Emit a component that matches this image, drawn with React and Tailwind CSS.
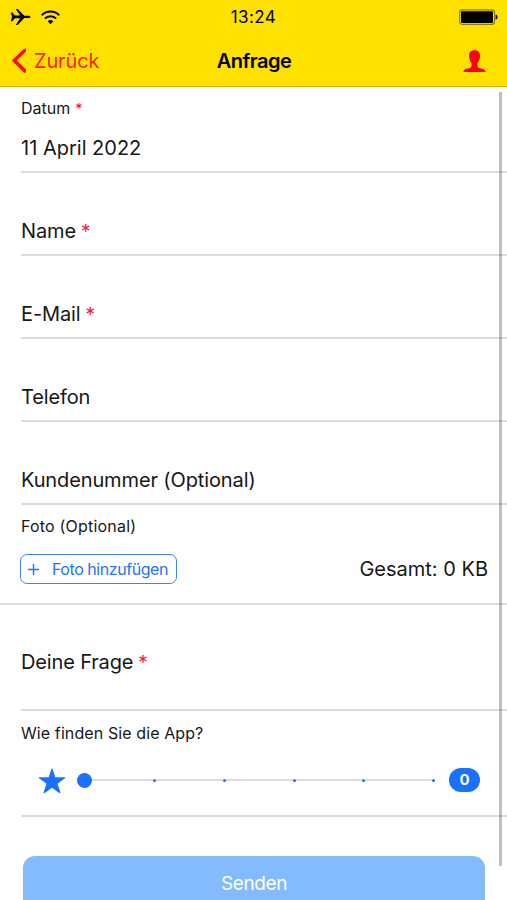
import { useState } from 'react';

const divider = 'ml-[21px] border-b-2 border-[#dcdcdc]';

function Required({ small }) {
  return (
    <span
      className={
        small
          ? 'ml-[5px] text-[14px] leading-none font-medium text-[#fb1436]'
          : 'ml-[5px] text-[19px] leading-none text-[#fb1436]'
      }
    >
      *
    </span>
  );
}

function StatusBar() {
  return (
    <div className="flex h-[34px] items-center justify-between pl-[10px] pr-[9px]">
      <div className="flex w-[60px] items-center gap-[10px]">
        <svg width="21" height="18" viewBox="0 0 21 18">
          <path
            d="M1 4.500h1.500l2.400 3 5.300.1L5.800.9h1.900l6.600 6.900h4.100c1.300 0 2 .5 2 1.100s-.7 1.100-2 1.100h-4.100L7.700 16.900H5.800l4.400-6.700-5.300.1-2.400 3H1l.9-4.400z"
            fill="#000"
          />
        </svg>
        <svg width="19" height="15" viewBox="0 0 19 15" fill="none" stroke="#000" strokeWidth="2">
          <path d="M.8 5.200a12.300 12.300 0 0 1 17.400 0M3.900 8.500a7.900 7.900 0 0 1 11.200 0" />
          <path d="M9.500 14.200 6.700 11.300a4 4 0 0 1 5.600 0z" fill="#000" stroke="none" />
        </svg>
      </div>
      <span className="-ml-px pt-[2px] text-[17px] tracking-[0.4px]">13:24</span>
      <div className="flex w-[60px] justify-end">
        <svg width="39" height="16" viewBox="0 0 39 16">
          <rect x=".7" y=".9" width="34.800" height="14.400" rx="2.500" fill="none" stroke="#8d7c00" strokeWidth="1.200" />
          <rect x="2" y="2.300" width="32" height="11.700" rx="1" fill="#000" />
          <path d="M36.600 5.400c1.400.3 1.900 1.300 1.900 2.700s-.5 2.400-1.900 2.700z" fill="#000" />
        </svg>
      </div>
    </div>
  );
}

function NavBar() {
  return (
    <div className="flex h-[53px] items-center justify-between pl-[11px] pr-[21px] pt-px text-[20px]">
      <button className="flex w-[100px] items-center gap-[8px] text-[#ff1a00]">
        <svg
          width="15"
          height="26"
          viewBox="0 0 15 26"
          fill="none"
          stroke="#ff0a0a"
          strokeWidth="3.400"
          strokeLinecap="round"
        >
          <path d="M14 2.200 3.200 12.500 14 23" />
        </svg>
        <span className="tracking-[-0.15px]">Zurück</span>
      </button>
      <h1 className="ml-[11px] font-semibold tracking-[-0.5px]">Anfrage</h1>
      <div className="flex w-[100px] justify-end">
        <svg width="23" height="23" viewBox="0 0 23 23">
          <path
            d="M11.500.2c3.500 0 5.500 2 5.500 5.500 0 3.200-1.100 5.700-2.500 7.300v2.900c0 1.500 1.600 2.200 3.700 2.600 2.500.5 4.200 1.200 4.400 3.500H.4c.2-2.300 1.900-3 4.400-3.500 2.100-.4 3.700-1.100 3.700-2.600V13C7.100 11.400 6 8.900 6 5.700 6 2.200 8 .2 11.500.2z"
            fill="#ff0010"
          />
        </svg>
      </div>
    </div>
  );
}

function Field({ label, required }) {
  return (
    <div className={`flex h-[83px] items-end pb-[8px] ${divider}`}>
      <label className="text-[20px] leading-[30px] tracking-[-0.12px]">
        {label}
        {required && <Required />}
      </label>
    </div>
  );
}

function RatingSlider({ value }) {
  return (
    <div className="mt-[22px] flex items-center pl-[17px]">
      <svg className="mt-[2px]" width="28" height="26" viewBox="0 0 26 25">
        <path
          d="M13 .8l2.900 8.700h9.300l-7.500 5.400 2.900 8.900-7.600-5.500-7.600 5.500 2.900-8.900L.8 9.500h9.300z"
          fill="#1a70ff"
          stroke="#1a70ff"
          strokeLinejoin="round"
        />
      </svg>
      <div className="ml-[11px] flex w-[358px] items-center">
        <span className="size-[15px] rounded-full bg-[#1a70ff]" />
        {/* first segment is shorter, it starts at the knob's edge */}
        {[1, 2, 3, 4, 5].map((step) => (
          <span key={step} className={step === 1 ? 'flex w-[64px] items-center' : 'flex flex-1 items-center'}>
            <span className="h-[2px] flex-1 bg-[#dcdcdc]" />
            <span className="size-[3px] rounded-full bg-[#1a70ff]" />
          </span>
        ))}
      </div>
      <span className="ml-[14px] flex h-[24px] w-[31px] items-center justify-center rounded-full bg-[#1a70ff] text-[15px] font-bold text-white">
        {value}
      </span>
    </div>
  );
}

export default function App() {
  const [rating] = useState(0);

  return (
    <div className="relative flex h-[900px] w-[507px] flex-col overflow-hidden bg-white font-['Inter',sans-serif] text-[#171717]">
      <header className="h-[87px] shrink-0 border-b border-[#c9b520] bg-[#ffe100] text-black">
        <StatusBar />
        <NavBar />
      </header>

      <main>
        <div className={`h-[86px] pt-[10px] ${divider}`}>
          <p className="text-[16px] leading-[22px]">
            Datum
            <Required small />
          </p>
          <p className="mt-[14px] text-[20px] leading-[30px]">11 April 2022</p>
        </div>

        <Field label="Name" required />
        <Field label="E-Mail" required />
        <Field label="Telefon" />
        <Field label="Kundenummer (Optional)" />

        <div className="h-[100px] border-b-2 border-[#dcdcdc] pl-[21px] pr-[19px] pt-[10px]">
          <p className="text-[16px] leading-[22px] tracking-[0.2px]">Foto (Optional)</p>
          <div className="mt-[17px] flex items-center justify-between">
            <button className="-ml-px flex h-[30px] w-[157px] items-center rounded-[7px] border-[1.500px] border-[#3d83f8] pl-[7px] text-[16px] text-[#2474f5]">
              <svg width="11" height="11" viewBox="0 0 11 11" stroke="#2474f5" strokeWidth="1.400">
                <path d="M5.500 0v11M0 5.500h11" />
              </svg>
              <span className="ml-[13px] whitespace-nowrap tracking-[-0.45px]">Foto hinzufügen</span>
            </button>
            <span className="text-[20px] leading-[30px]">Gesamt: 0 KB</span>
          </div>
        </div>

        <div className={`h-[106px] pt-[42px] ${divider}`}>
          <label className="block text-[20px] leading-[30px] tracking-[-0.15px]">
            Deine Frage
            <Required />
          </label>
        </div>

        <div className={`h-[106px] pt-[11px] ${divider}`}>
          <p className="text-[16px] leading-[22px] tracking-[0.1px]">Wie finden Sie die App?</p>
          <RatingSlider value={rating} />
        </div>

        <button className="ml-[23px] mt-[39px] block h-[55px] w-[462px] rounded-[12px] bg-[#84bbff] pt-[2px] text-[19px] tracking-[-0.4px] text-white">
          Senden
        </button>
      </main>

      {/* scroll indicator */}
      <div className="absolute right-[5px] top-[92px] h-[774px] w-[3px] bg-black/25" />
    </div>
  );
}
